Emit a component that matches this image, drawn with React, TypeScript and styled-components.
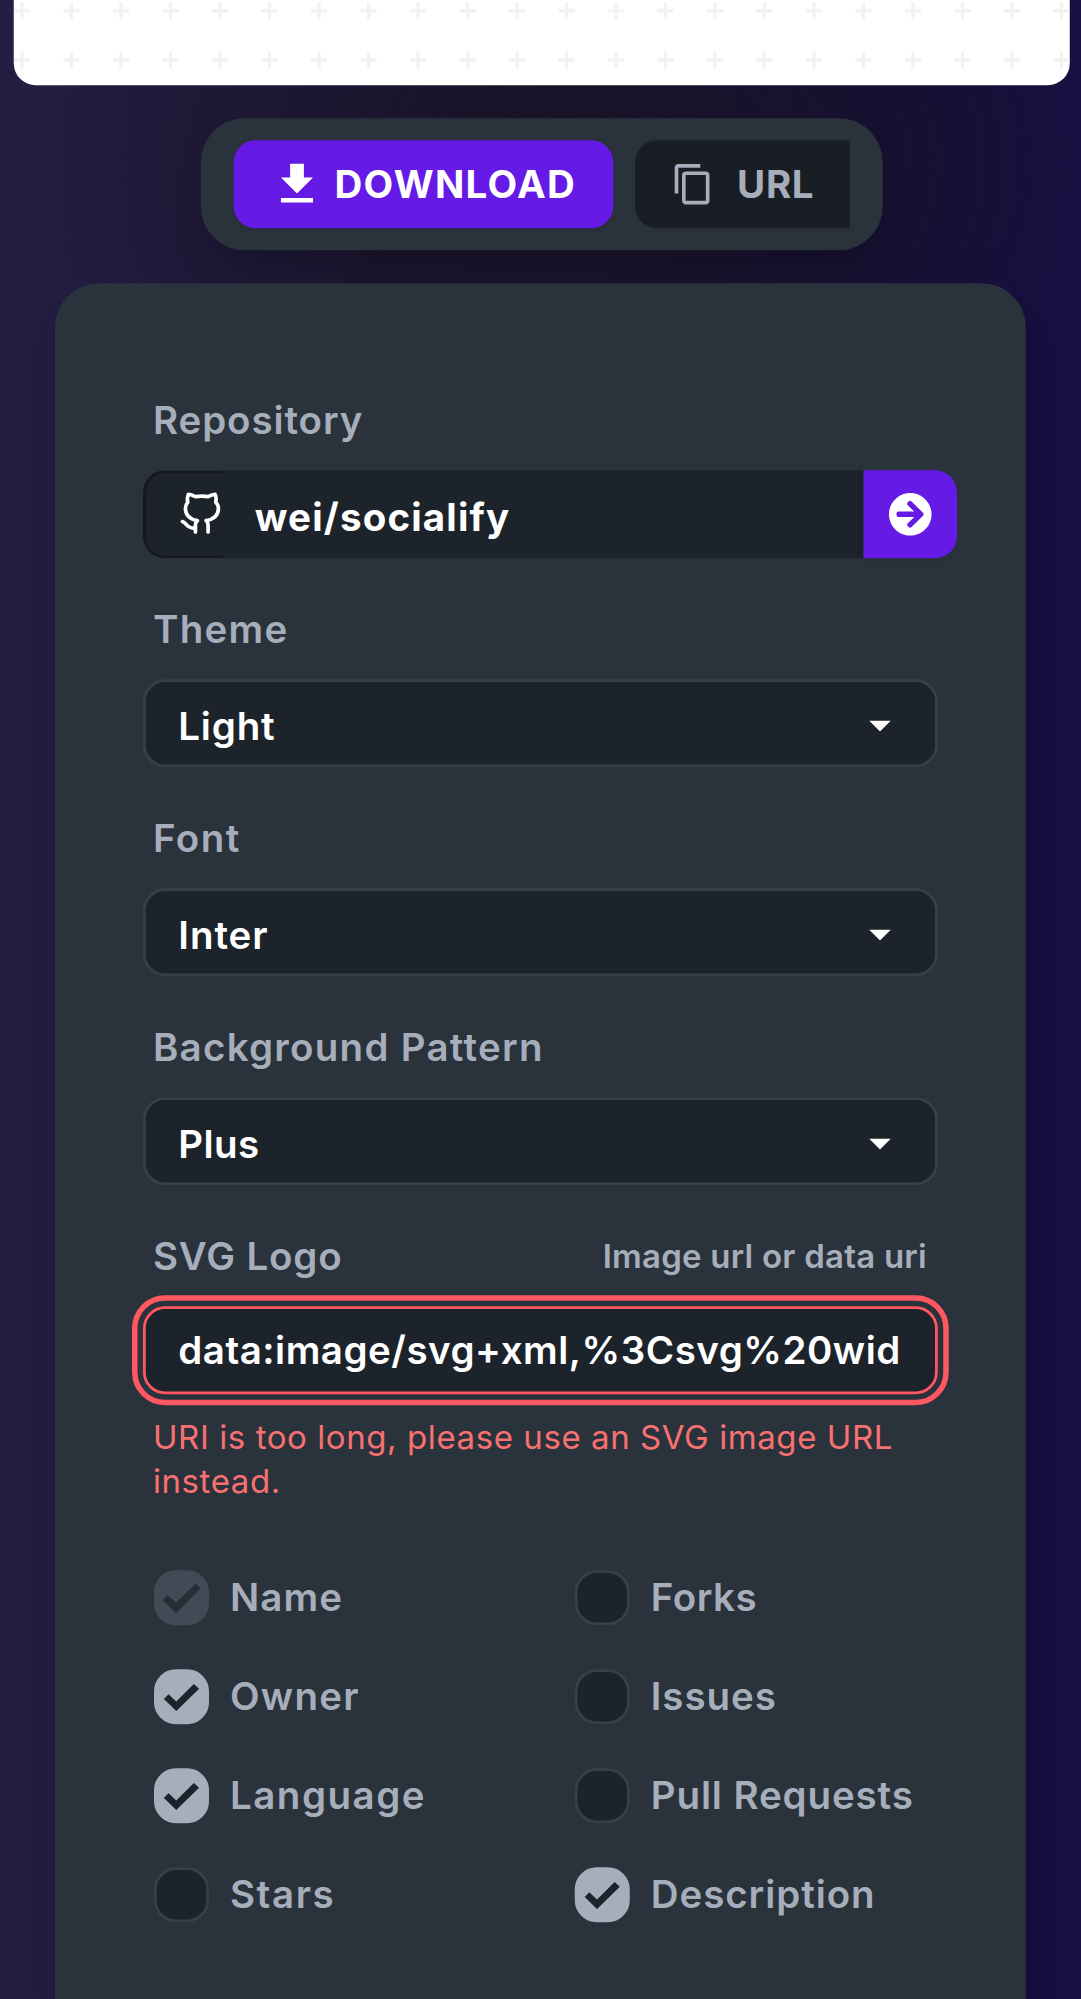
import React from "react";
import styled, { createGlobalStyle, css } from "styled-components";
import { MdDownload, MdContentCopy } from "react-icons/md";
import { FaArrowCircleRight } from "react-icons/fa";

const Global = createGlobalStyle`
  *, *::before, *::after { box-sizing: border-box; }
  html, body { margin: 0; padding: 0; background: #16103d; overflow: hidden; }
  body { height: 1999px; }
`;

const SCALE = 2.75;

const Screen = styled.div`
  width: ${1081 / SCALE}px;
  height: ${1999 / SCALE}px;
  transform: scale(${SCALE});
  transform-origin: 0 0;
  overflow: hidden;
  display: flex;
  flex-direction: column;
  align-items: center;
  gap: 12px;
  font-family: Inter, sans-serif;
  font-size: 14px;
  line-height: 20px;
  color: #a6adbb;
  background:
    radial-gradient(ellipse 190px 130px at 52% 60px, rgba(24, 20, 38, 1), rgba(24, 20, 38, 0)),
    linear-gradient(90deg, #241e43 0%, #1c1636 40%, #150f35 75%, #170f40 100%);
`;

const Preview = styled.div`
  flex: none;
  width: 384px;
  height: 30.8px;
  margin-left: 1px;
  border-radius: 0 0 8px 8px;
  overflow: hidden;
  background: #fff;
  svg { display: block; }
`;

const Toolbar = styled.div`
  flex: none;
  display: flex;
  gap: 8px;
  height: 48px;
  margin-left: 1px;
  padding: 8px 12px;
  border-radius: 16px;
  background: #2a323c;
  box-shadow: 0 10px 15px -3px rgba(0, 0, 0, 0.1), 0 4px 6px -4px rgba(0, 0, 0, 0.1);
`;

const Button = styled.button<{ $primary?: boolean }>`
  display: flex;
  align-items: center;
  height: 32px;
  margin: 0;
  padding: 0 12px;
  font: inherit;
  font-weight: 700;
  line-height: 14px;
  border: 1px solid ${(p) => (p.$primary ? "#661ae6" : "#191e24")};
  background: ${(p) => (p.$primary ? "#661ae6" : "#191e24")};
  color: ${(p) => (p.$primary ? "#fff" : "#a6adbb")};
  width: ${(p) => (p.$primary ? 138 : 78)}px;
  gap: ${(p) => (p.$primary ? 3.6 : 8)}px;
  border-radius: ${(p) => (p.$primary ? "8px" : "8px 0 0 8px")};
  box-shadow: 0 1px 2px rgba(0, 0, 0, 0.05);
  svg { flex: none; }
`;

const Form = styled.form`
  flex: none;
  width: 353px;
  height: 700px;
  padding: 32px;
  border-radius: 16px;
  background: #2a323c;
  box-shadow: 0 10px 15px -3px rgba(0, 0, 0, 0.1), 0 4px 6px -4px rgba(0, 0, 0, 0.1);
`;

const Field = styled.div`
  display: flex;
  flex-direction: column;
  margin-bottom: 8px;
`;

const Text = styled.span<{ $track?: number }>`
  letter-spacing: ${(p) => p.$track ?? 0}px;
  white-space: nowrap;
`;

const LabelText = styled(Text)`
  transform: translateY(-0.1px);
`;

const LabelRow = styled.div`
  display: flex;
  justify-content: space-between;
  align-items: center;
  padding: 8px 4px 8px 3.6px;
  font-weight: 600;
`;

const Hint = styled(Text)`
  font-size: 12px;
  line-height: 16px;
`;

const ErrorText = styled.div`
  padding: 8px 0 8px 3.6px;
  font-size: 12px;
  line-height: 16px;
  letter-spacing: 0.21px;
  color: #f87171;
`;

const Box = styled.div<{ $error?: boolean }>`
  display: flex;
  align-items: center;
  justify-content: space-between;
  height: 32px;
  padding: ${(p) => (p.$error ? 0 : 1.8)}px 12px 0 11.8px;
  border: 1px solid #383f47;
  border-radius: 8px;
  background: #1d232a;
  color: #fff;
  font-weight: 600;
  white-space: nowrap;
  ${(p) =>
    p.$error &&
    css`
      border-color: #ff5861;
      outline: 2px solid #ff5861;
      outline-offset: 2px;
    `}
`;

const Caret = styled.svg`
  width: 8px;
  height: 4px;
  margin-right: 4px;
  fill: #fff;
`;

const Join = styled.div`
  display: flex;
  width: 296px;
  height: 32px;
  color: #fff;
`;

const JoinIcon = styled.div`
  display: flex;
  align-items: center;
  width: 29px;
  padding-left: 12px;
  border: 1px solid #15191e;
  border-right: 0;
  border-radius: 8px 0 0 8px;
  background: #1d232a;
  svg { flex: none; overflow: visible; }
`;

const JoinInput = styled.div`
  flex: 1;
  padding: 6.9px 12px 0 11.6px;
  background: #1d232a;
  font-weight: 700;
`;

const JoinButton = styled.button`
  display: flex;
  align-items: center;
  justify-content: center;
  width: 34px;
  padding: 0;
  border: 0;
  border-radius: 0 8px 8px 0;
  background: #661ae6;
  color: #fff;
  box-shadow: 0 1px 2px rgba(0, 0, 0, 0.05);
`;

const Options = styled.div`
  display: grid;
  grid-template-columns: 153px 1fr;
  grid-auto-flow: column;
  grid-template-rows: repeat(4, 36px);
`;

const Option = styled.label`
  display: flex;
  align-items: center;
  gap: 7.6px;
  padding: 8px 4px;
  font-weight: 600;
  white-space: nowrap;
`;

const Check = styled.span<{ $on?: boolean; $disabled?: boolean }>`
  flex: none;
  width: 20px;
  height: 20px;
  border: 1px solid ${(p) => (p.$on ? "#a6adbb" : "#383f47")};
  border-radius: 8px;
  background: ${(p) => (p.$on ? "#a6adbb" : "#1d232a")};
  opacity: ${(p) => (p.$disabled ? 0.2 : 1)};
  svg { display: block; width: 18px; height: 18px; }
`;

const PlusPattern = () => (
  <svg width="384" height="31" viewBox="0 0 384 31">
    {[3.9, 21.9].map((y) =>
      Array.from({ length: 22 }, (_, i) => (
        <path key={`${y}-${i}`} d={`M${i * 18} ${y}h6M${i * 18 + 3} ${y - 3}v6`} stroke="#f2f2f2" strokeWidth="1.2" />
      ))
    )}
  </svg>
);

const GithubIcon = () => (
  <svg width="16" height="16" viewBox="26 36 132 132" fill="none" stroke="#fff" strokeWidth="11" strokeLinecap="round" strokeLinejoin="round">
    <path d="M76 155V134Q76 126 82 121C60 118 46 105 46 85Q46 74 53 66Q50 53 55 42Q64 43 76 49Q95 46 114 49Q126 43 135 42Q140 53 137 66Q145 74 145 85C145 105 131 118 108 121Q114 126 114 134V155" />
    <path d="M37 124C51 128 48 145 75 144" />
  </svg>
);

type SelectProps = { label: string; value: string; labelTrack: number; valueTrack: number };

const Select = ({ label, value, labelTrack, valueTrack }: SelectProps) => (
  <Field>
    <LabelRow><LabelText $track={labelTrack}>{label}</LabelText></LabelRow>
    <Box>
      <Text $track={valueTrack}>{value}</Text>
      <Caret viewBox="0 0 8 4"><path d="M0 0h8L4 4z" /></Caret>
    </Box>
  </Field>
);

const OPTIONS = [
  { name: "Name", track: 0.4, on: true, disabled: true },
  { name: "Owner", track: 0.46, on: true },
  { name: "Language", track: 0.55, on: true },
  { name: "Stars", track: 0.58 },
  { name: "Forks", track: 0.2 },
  { name: "Issues", track: 0.35 },
  { name: "Pull Requests", track: 0.32 },
  { name: "Description", track: 0.34, on: true },
];

const CHECK = "3.6,10.8 5.3,9.1 8.1,11.7 14.5,5.4 16.4,7.1 8.1,15.2";
const CHECK_WIDE = "3,10.9 4.9,9 8,11.8 15.2,4.8 17,6.5 8,15.6";

export default function App() {
  return (
    <>
      <Global />
      <Screen>
        <Preview><PlusPattern /></Preview>
        <Toolbar>
          <Button $primary><MdDownload size={20} /><Text $track={0.48}>DOWNLOAD</Text></Button>
          <Button><MdContentCopy size={16} /><Text $track={0.23}>URL</Text></Button>
        </Toolbar>
        <Form>
          <Field>
            <LabelRow><LabelText $track={0.33}>Repository</LabelText></LabelRow>
            <Join>
              <JoinIcon><GithubIcon /></JoinIcon>
              <JoinInput><Text $track={0.425}>wei/socialify</Text></JoinInput>
              <JoinButton type="button"><FaArrowCircleRight size={16} /></JoinButton>
            </Join>
          </Field>
          <Select label="Theme" value="Light" labelTrack={0.46} valueTrack={0.3} />
          <Select label="Font" value="Inter" labelTrack={0.54} valueTrack={0.35} />
          <Select label="Background Pattern" value="Plus" labelTrack={0.46} valueTrack={0.15} />
          <Field>
            <LabelRow><LabelText $track={0.3}>SVG Logo</LabelText><Hint $track={0.08}>Image url or data uri</Hint></LabelRow>
            <Box $error><Text $track={0.185}>data:image/svg+xml,%3Csvg%20wid</Text></Box>
            <ErrorText>URI is too long, please use an SVG image URL instead.</ErrorText>
          </Field>
          <Options>
            {OPTIONS.map((o) => (
              <Option key={o.name}>
                <Check $on={o.on} $disabled={o.disabled}>
                  {o.on && (
                    <svg viewBox="1 1 18 18"><polygon points={o.disabled ? CHECK_WIDE : CHECK} fill="#1d232a" /></svg>
                  )}
                </Check>
                <LabelText $track={o.track}>{o.name}</LabelText>
              </Option>
            ))}
          </Options>
        </Form>
      </Screen>
    </>
  );
}
